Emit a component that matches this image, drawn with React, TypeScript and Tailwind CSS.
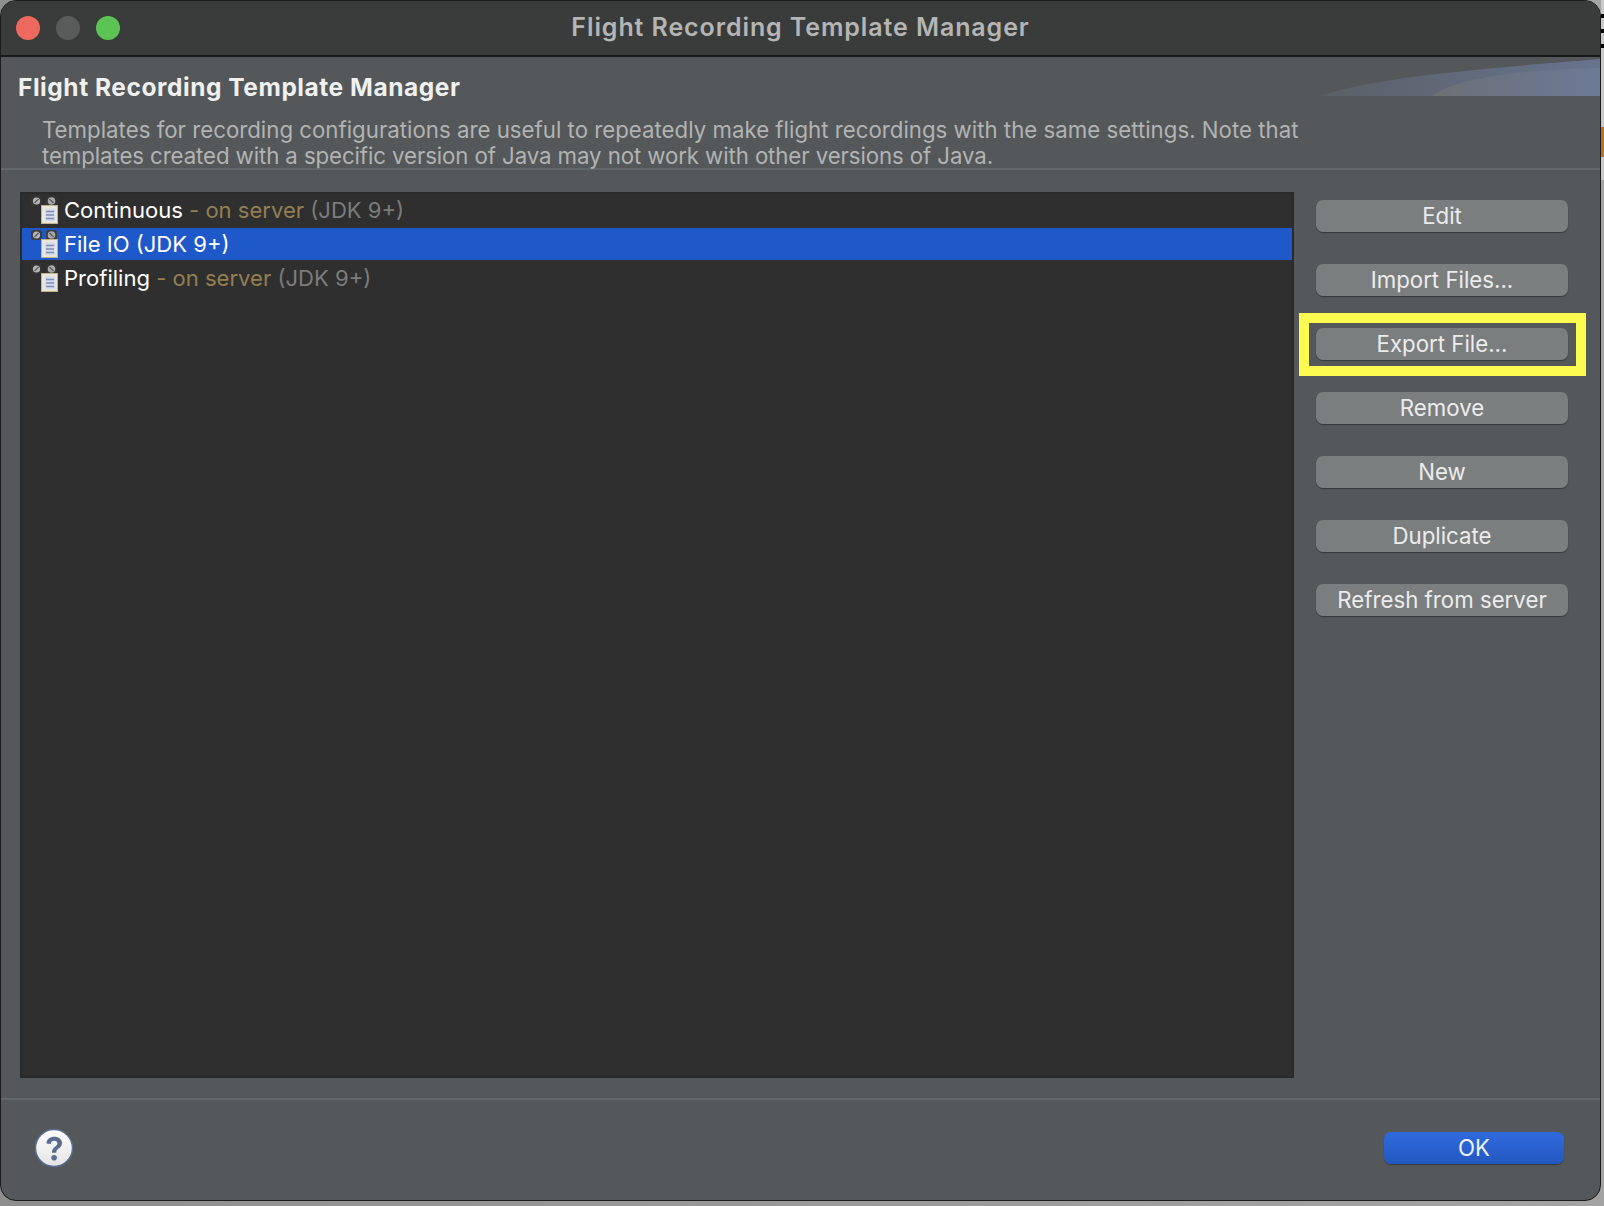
import * as React from "react"

const font = { sans: "font-['Inter','Liberation_Sans',sans-serif]" }

function TemplateIcon({ selected }: { selected?: boolean }) {
  const ring = selected ? "#3b3d42" : "#343434"
  return (
    <svg width="28" height="28" viewBox="0 0 28 28" className="shrink-0">
      <rect x="0" y="0" width="11" height="10" rx="2.5" fill={ring} />
      <rect x="15" y="0" width="11" height="10" rx="2.5" fill={ring} />
      <circle cx="5.5" cy="5" r="3.6" fill="#b5b5b5" />
      <path d="M3.5 7 L7.5 3" stroke="#5a5a5a" strokeWidth="1.3" />
      <circle cx="20.5" cy="5" r="3.8" fill="#a8a8a8" />
      <path d="M18.5 3 L22.5 7" stroke="#5a5a5a" strokeWidth="1.3" />
      <rect x="10.5" y="9.5" width="16" height="18" fill="#e9e7dd" stroke="#bdb48c" strokeWidth="1" />
      <rect x="14" y="12.5" width="10" height="12.5" fill="#d5dcea" />
      <path d="M15 15.5 H23 M15 19 H23 M15 22.5 H23" stroke="#7d8db8" strokeWidth="1.5" />
    </svg>
  )
}

function ListRow({ name, server, selected, first }: { name: string; server?: boolean; selected?: boolean; first?: boolean }) {
  return (
    <div className={`flex h-8 items-center pl-[9px] text-[22.05px] ${selected ? "bg-[#1f58c8]" : ""} ${first ? "pb-1" : ""}`}>
      <TemplateIcon selected={selected} />
      <div className="ml-[5px] whitespace-pre pt-[2px]">
        <span className="text-white">{name}</span>
        {server && <span className="text-[#937f52]"> - on server </span>}
        {server && <span className="text-[#7c7c7c]">(JDK 9+)</span>}
        {selected && <span className="text-white"> (JDK 9+)</span>}
      </div>
    </div>
  )
}

function SideButton({ label }: { label: string }) {
  return (
    <button className="flex h-8 w-[252px] items-center justify-center rounded-[7px] bg-[#7b7e7f] text-[22.25px] text-[#ececec] shadow-[0_1px_1px_rgba(0,0,0,0.35)]">
      {label}
    </button>
  )
}

function HelpIcon() {
  return (
    <svg width="40" height="40" viewBox="0 0 40 40">
      <defs>
        <linearGradient id="helpBg" x1="0" y1="0" x2="0" y2="1">
          <stop offset="0" stopColor="#ffffff" />
          <stop offset="1" stopColor="#e4e4e4" />
        </linearGradient>
      </defs>
      <circle cx="20" cy="20" r="18.5" fill="url(#helpBg)" stroke="#5b6f94" strokeWidth="1.5" />
      <path
        d="M12.5 15.5 C12.5 11 16 8.7 20.3 8.7 C25 8.7 28 11.3 28 15 C28 18 26.4 19.4 24.4 20.8 C22.8 21.9 22.3 22.7 22.3 24.8 H18 C18 21.6 18.9 20.2 21 18.7 C22.7 17.5 23.4 16.7 23.4 15.3 C23.4 13.7 22.2 12.7 20.2 12.7 C18.2 12.7 17 13.8 16.9 15.9 Z"
        fill="#5b6c8f"
      />
      <circle cx="20.1" cy="29.7" r="2.8" fill="#5b6c8f" />
    </svg>
  )
}

const buttons = ["Edit", "Import Files...", "Export File...", "Remove", "New", "Duplicate", "Refresh from server"]

export default function App() {
  return (
    <div className={`flex h-[1206px] w-[1604px] items-start overflow-hidden bg-[linear-gradient(90deg,#8e8e8e,#a3a3a3)] ${font.sans}`}>
      <div className="flex h-[1201px] w-[1601px] shrink-0 flex-col overflow-hidden rounded-[16px] border border-[#1c1c1c] bg-[#54585a]">
        {/* Title bar */}
        <div className="relative flex h-[56px] shrink-0 items-center justify-center border-b-2 border-[#17191a] bg-[#3a3c3b]">
          <div className="absolute left-[15px] top-[15px] flex gap-4">
            <span className="h-6 w-6 rounded-full bg-[#ee6a5f]" />
            <span className="h-6 w-6 rounded-full bg-[#5a5c5c]" />
            <span className="h-6 w-6 rounded-full bg-[#5cc454]" />
          </div>
          <span className="text-[25px] font-semibold tracking-[0.9px] text-[#b4b5b4]">Flight Recording Template Manager</span>
        </div>

        {/* Header */}
        <div className="relative h-[113px] shrink-0 border-b-2 border-[#62676a] pl-[17px]">
          <svg className="absolute right-0 top-0" width="280" height="40" viewBox="0 0 280 40">
            <defs>
              <linearGradient id="bannerA" x1="0" y1="0" x2="1" y2="0">
                <stop offset="0" stopColor="#5b6066" />
                <stop offset="1" stopColor="#67748e" />
              </linearGradient>
              <linearGradient id="bannerB" x1="0" y1="0" x2="1" y2="0">
                <stop offset="0" stopColor="#6c7076" />
                <stop offset="1" stopColor="#6c7a96" />
              </linearGradient>
            </defs>
            <path d="M0 39 C50 22 130 14 280 2 V39 Z" fill="url(#bannerA)" />
            <path d="M112 39 C135 22 190 13 280 11 V39 Z" fill="url(#bannerB)" />
          </svg>
          <h1 className="pt-[15px] text-[24.5px] font-bold leading-[30px] tracking-[0.55px] text-[#f0f0f0]">Flight Recording Template Manager</h1>
          <p className="ml-[24px] mt-[15px] w-[1280px] text-[22.25px] leading-[26px] text-[#b2b3b3]">
            Templates for recording configurations are useful to repeatedly make flight recordings with the same settings. Note that{" "}
            <span className="tracking-[-0.1px]">templates created with a specific version of Java may not work with other versions of Java.</span>
          </p>
        </div>

        {/* Body */}
        <div className="flex h-[930px] shrink-0 border-b-2 border-[#62676a] pl-[19px] pt-[22px]">
          <div className="h-[886px] w-[1274px] border-2 border-[#2a2a2a] bg-[#2f2f2f] pt-[2px]">
            <ListRow name="Continuous" server first />
            <ListRow name="File IO" selected />
            <div className="h-[2px]" />
            <ListRow name="Profiling" server />
          </div>
          <div className="relative ml-[22px] flex flex-col gap-8 pt-[8px]">
            {buttons.map((b) => (
              <SideButton key={b} label={b} />
            ))}
            {/* Highlight marker */}
            <div className="absolute left-[-17px] top-[121px] h-[63px] w-[287px] border-[10px] border-[#fdfb50]" />
          </div>
        </div>

        {/* Footer */}
        <div className="flex flex-1 items-center justify-between pb-1 pl-[33px] pr-[36px]">
          <HelpIcon />
          <button className="flex h-8 w-[180px] items-center justify-center rounded-[7px] bg-[linear-gradient(#2f6ade,#2458c0)] text-[22.25px] text-[#ecf1fb] shadow-[0_1px_1px_rgba(0,0,0,0.35)]">
            OK
          </button>
        </div>
      </div>

      {/* Strip of the window behind */}
      <div className="flex h-[180px] w-[3px] shrink-0 flex-col bg-[#c9c9c9]">
        <div className="mt-[14px] h-1 bg-black" />
        <div className="mt-[11px] h-1 bg-black" />
        <div className="mt-[11px] h-1 bg-black" />
        <div className="mt-[79px] h-[30px] bg-[#b9731f]" />
      </div>
    </div>
  )
}
